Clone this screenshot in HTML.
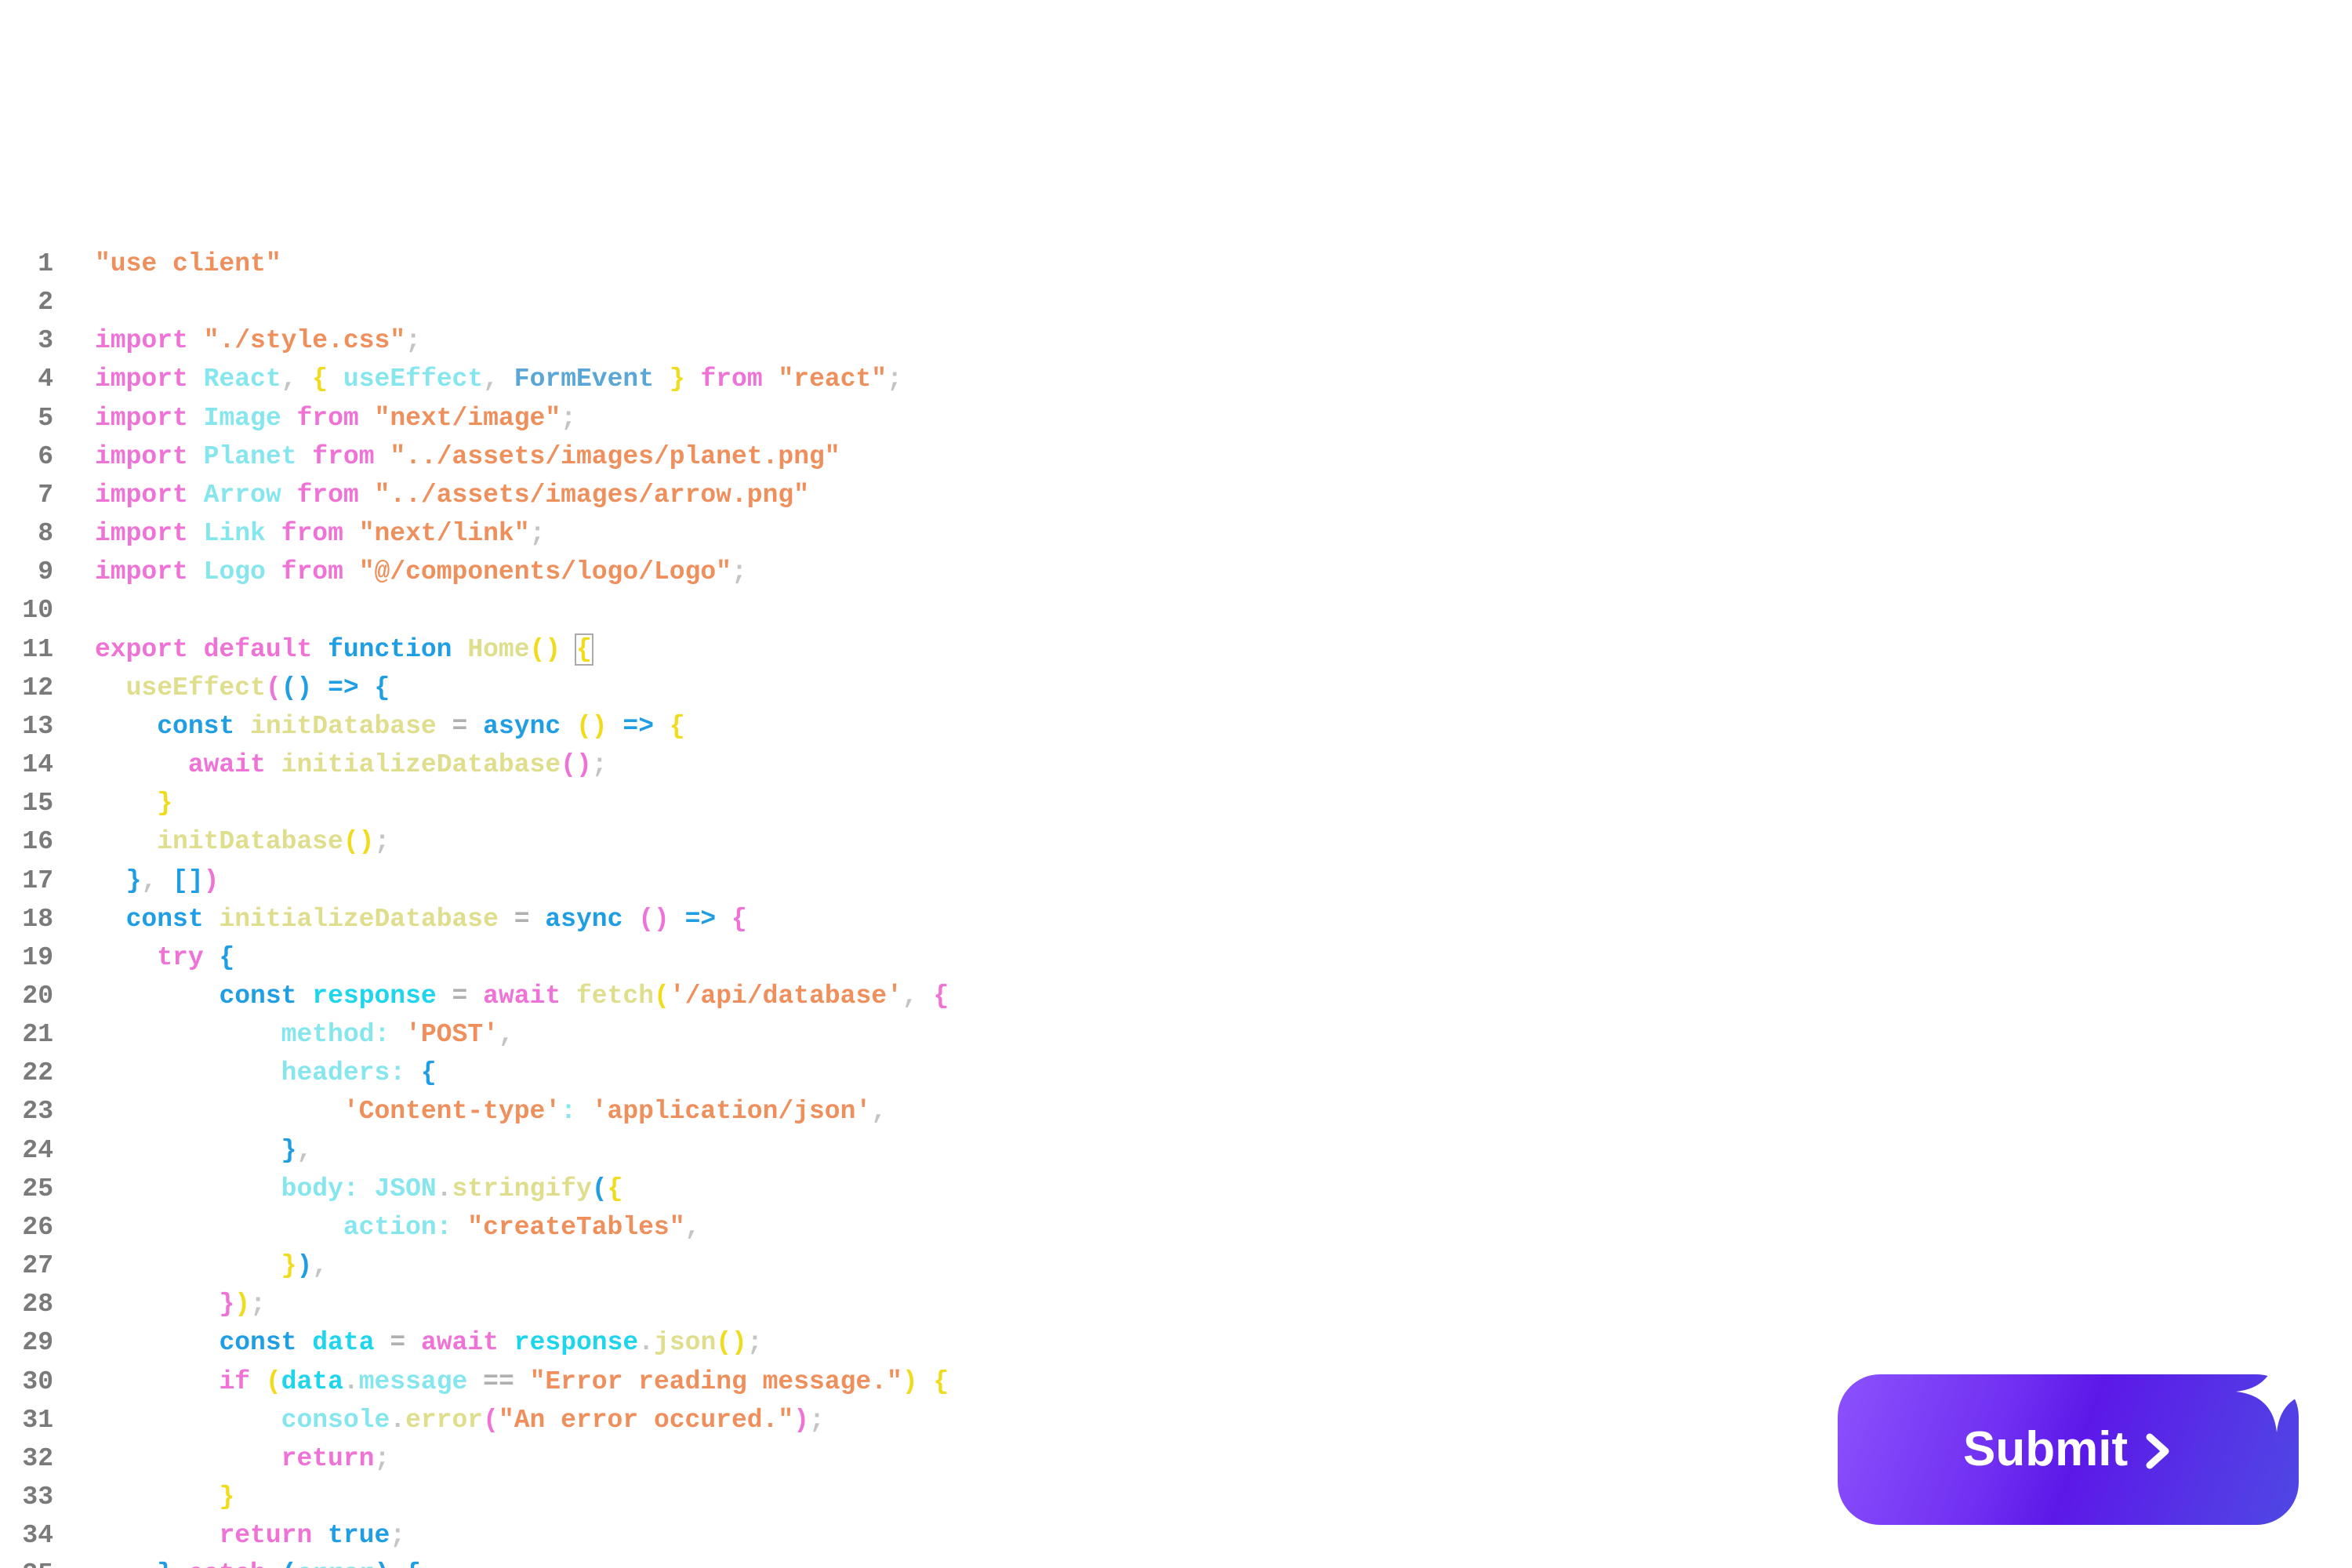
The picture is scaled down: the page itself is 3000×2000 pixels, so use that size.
<!DOCTYPE html>
<html><head><meta charset="utf-8"><style>
html,body{margin:0;padding:0;background:#fff;width:3000px;height:2000px;overflow:hidden;position:relative}
.code{position:absolute;left:0;top:312px;font-family:"Liberation Mono",monospace;font-size:33px;line-height:49.15px;white-space:pre;font-weight:bold}
.ln{position:absolute;left:0;top:0;width:68px;text-align:right;color:#7a7a7a}
.tx{position:absolute;left:121px;top:0}
.k{color:#ef72d6}.s{color:#ef8f5c}.i{color:#86e6ee}.b{color:#f0dc1c}.c{color:#1f9ee4}.f{color:#dede8c}.p{color:#c4c4c4}.fe{color:#5aa6d6}.d{color:#1ed6ec}.o{color:#b0b0b0}
.btn{position:absolute;left:2344px;top:1753px;width:588px;height:192px;border-radius:54px;background:linear-gradient(110deg,#8c52fc 0%,#7130f2 35%,#5c18e8 52%,#5630e6 75%,#4f48e4 100%);}
.btn span{position:absolute;left:160px;top:0;line-height:192px;font-family:"Liberation Sans",sans-serif;font-weight:bold;font-size:62px;color:#fff}
</style></head><body>
<div class="code"><div class="ln">1
2
3
4
5
6
7
8
9
10
11
12
13
14
15
16
17
18
19
20
21
22
23
24
25
26
27
28
29
30
31
32
33
34
35</div><div class="tx"><span class="s">"use client"</span>

<span class="k">import</span> <span class="s">"./style.css"</span><span class="p">;</span>
<span class="k">import</span> <span class="i">React</span><span class="p">,</span> <span class="b">{</span> <span class="i">useEffect</span><span class="p">,</span> <span class="fe">FormEvent</span> <span class="b">}</span> <span class="k">from</span> <span class="s">"react"</span><span class="p">;</span>
<span class="k">import</span> <span class="i">Image</span> <span class="k">from</span> <span class="s">"next/image"</span><span class="p">;</span>
<span class="k">import</span> <span class="i">Planet</span> <span class="k">from</span> <span class="s">"../assets/images/planet.png"</span>
<span class="k">import</span> <span class="i">Arrow</span> <span class="k">from</span> <span class="s">"../assets/images/arrow.png"</span>
<span class="k">import</span> <span class="i">Link</span> <span class="k">from</span> <span class="s">"next/link"</span><span class="p">;</span>
<span class="k">import</span> <span class="i">Logo</span> <span class="k">from</span> <span class="s">"@/components/logo/Logo"</span><span class="p">;</span>

<span class="k">export default</span> <span class="c">function</span> <span class="f">Home</span><span class="b">()</span> <span class="b" style="outline:2px solid #aaa">{</span>
  <span class="f">useEffect</span><span class="k">(</span><span class="c">()</span> <span class="c">=&gt;</span> <span class="c">{</span>
    <span class="c">const</span> <span class="f">initDatabase</span> <span class="o">=</span> <span class="c">async</span> <span class="b">()</span> <span class="c">=&gt;</span> <span class="b">{</span>
      <span class="k">await</span> <span class="f">initializeDatabase</span><span class="k">()</span><span class="p">;</span>
    <span class="b">}</span>
    <span class="f">initDatabase</span><span class="b">()</span><span class="p">;</span>
  <span class="c">}</span><span class="p">,</span> <span class="c">[]</span><span class="k">)</span>
  <span class="c">const</span> <span class="f">initializeDatabase</span> <span class="o">=</span> <span class="c">async</span> <span class="k">()</span> <span class="c">=&gt;</span> <span class="k">{</span>
    <span class="k">try</span> <span class="c">{</span>
        <span class="c">const</span> <span class="d">response</span> <span class="o">=</span> <span class="k">await</span> <span class="f">fetch</span><span class="b">(</span><span class="s">'/api/database'</span><span class="p">,</span> <span class="k">{</span>
            <span class="i">method:</span> <span class="s">'POST'</span><span class="p">,</span>
            <span class="i">headers:</span> <span class="c">{</span>
                <span class="s">'Content-type'</span><span class="i">:</span> <span class="s">'application/json'</span><span class="p">,</span>
            <span class="c">}</span><span class="p">,</span>
            <span class="i">body:</span> <span class="i">JSON</span><span class="p">.</span><span class="f">stringify</span><span class="c">(</span><span class="b">{</span>
                <span class="i">action:</span> <span class="s">"createTables"</span><span class="p">,</span>
            <span class="b">}</span><span class="c">)</span><span class="p">,</span>
        <span class="k">}</span><span class="b">)</span><span class="p">;</span>
        <span class="c">const</span> <span class="d">data</span> <span class="o">=</span> <span class="k">await</span> <span class="d">response</span><span class="p">.</span><span class="f">json</span><span class="b">()</span><span class="p">;</span>
        <span class="k">if</span> <span class="b">(</span><span class="d">data</span><span class="p">.</span><span class="i">message</span> <span class="o">==</span> <span class="s">"Error reading message."</span><span class="b">)</span> <span class="b">{</span>
            <span class="i">console</span><span class="p">.</span><span class="f">error</span><span class="k">(</span><span class="s">"An error occured."</span><span class="k">)</span><span class="p">;</span>
            <span class="k">return</span><span class="p">;</span>
        <span class="b">}</span>
        <span class="k">return</span> <span class="c">true</span><span class="p">;</span>
    <span class="c">}</span> <span class="k">catch</span> <span class="c">(</span><span class="i">error</span><span class="c">)</span> <span class="c">{</span></div></div>
<div class="btn"><span>Submit</span>
<svg style="position:absolute;left:392px;top:75px" width="34" height="46" viewBox="0 0 34 46"><path d="M6 5 L26 23 L6 41" fill="none" stroke="#fff" stroke-width="9" stroke-linecap="round" stroke-linejoin="round"/></svg>
</div>
<svg style="position:absolute;left:2849px;top:1720px" width="110" height="110" viewBox="-55 -55 110 110"><path d="M0,-52 Q5,-5 52,0 Q5,5 0,52 Q-5,5 -52,0 Q-5,-5 0,-52Z" fill="#fff"/></svg>
</body></html>
